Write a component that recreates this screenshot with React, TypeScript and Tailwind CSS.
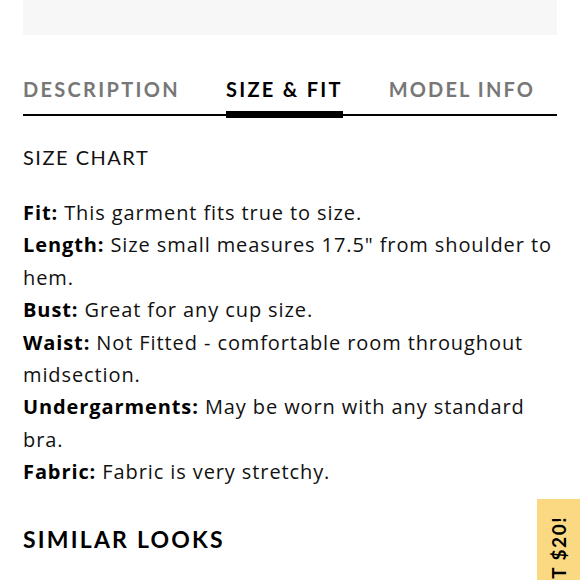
import React from "react";

const specs = [
  { label: "Fit:", text: "This garment fits true to size." },
  { label: "Length:", text: 'Size small measures 17.5" from shoulder to hem.' },
  { label: "Bust:", text: "Great for any cup size." },
  { label: "Waist:", text: "Not Fitted - comfortable room throughout midsection." },
  { label: "Undergarments:", text: "May be worn with any standard bra." },
  { label: "Fabric:", text: "Fabric is very stretchy." },
];

export default function App() {
  return (
    <div
      className="relative h-[580px] w-[580px] overflow-hidden bg-white text-[#111]"
      style={{ fontFamily: "Lato, 'Open Sans', sans-serif" }}
    >
      <div className="px-[23px]">
        {/* image placeholder */}
        <div className="h-[35px] bg-[#f7f7f7]" />

        {/* Tabs */}
        <div className="mt-[42px] flex gap-[46px] border-b-2 border-black">
          <div className="pb-[13px] text-[20px] font-bold leading-[24px] tracking-[2.3px] text-[#777]">
            DESCRIPTION
          </div>
          <div className="relative pb-[13px] text-[20px] font-bold leading-[24px] tracking-[2.3px] text-black">
            SIZE &amp; FIT
            <div className="absolute bottom-[-4px] left-0 right-0 h-[7px] bg-black" />
          </div>
          <div className="pb-[13px] text-[20px] font-bold leading-[24px] tracking-[2.1px] text-[#777]">
            MODEL INFO
          </div>
        </div>

        <div className="mt-[29px] text-[20px] leading-[24px] tracking-[1.5px]">SIZE CHART</div>

        <div
          className="mt-[28px] text-[20px] leading-[32.4px] tracking-[0.9px]"
          style={{ fontFamily: "'Open Sans', Lato, sans-serif" }}
        >
          {specs.map((s) => (
            <p key={s.label}>
              <span className="font-bold text-black">{s.label}</span> {s.text}
            </p>
          ))}
        </div>

        <h2 className="mt-[36px] text-[23px] font-bold leading-[28px] tracking-[2.2px] text-black">
          SIMILAR LOOKS
        </h2>
      </div>

      {/* side promo tab */}
      <div className="absolute right-0 top-[499px] flex h-[120px] w-[43px] items-start justify-center bg-[#fbd983]">
        <span className="mt-[17px] whitespace-nowrap text-[19px] font-bold leading-none tracking-[1.5px] text-black [writing-mode:vertical-rl] rotate-180">
          GET $20!
        </span>
      </div>
    </div>
  );
}
